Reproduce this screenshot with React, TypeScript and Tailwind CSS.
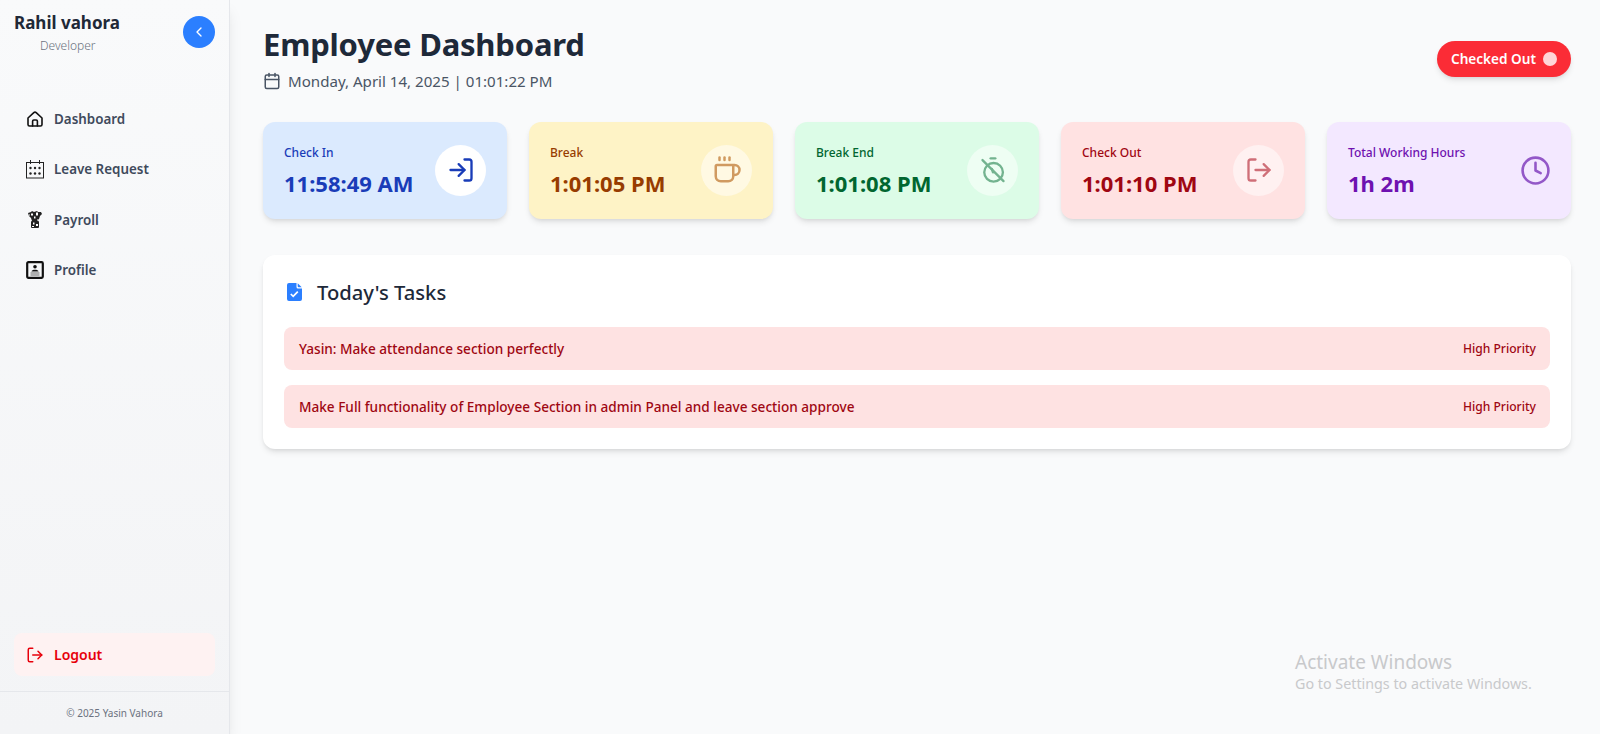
import type { ReactNode } from "react";
import { ChevronLeft, Calendar, LogIn, LogOut, Coffee, Clock } from "lucide-react";

const F = "font-['Noto_Sans','Open_Sans',sans-serif]";

function HomeIcon() {
  return (
    <svg width="18" height="18" viewBox="0 0 18 18" fill="none" stroke="#111" strokeWidth="1.6" strokeLinejoin="round" strokeLinecap="round">
      <path d="M2 8 L7.8 2.6 a1.8 1.8 0 0 1 2.4 0 L16 8 V14.5 a1.5 1.5 0 0 1 -1.5 1.5 H3.5 A1.5 1.5 0 0 1 2 14.5 Z" />
      <path d="M6.6 16 V11.2 a1.2 1.2 0 0 1 1.2 -1.2 h2.4 a1.2 1.2 0 0 1 1.2 1.2 V16" />
    </svg>
  );
}

function CalIcon() {
  return (
    <svg width="20" height="20" viewBox="0 0 20 20" fill="none" stroke="#222" strokeWidth="1">
      <rect x="1.5" y="3.5" width="17" height="15.5" />
      <path d="M5.5 1v4M14.5 1v4" />
      <g fill="#222" stroke="none">
        <circle cx="5.5" cy="9" r="1.2" /><circle cx="10" cy="9" r="1.2" /><circle cx="14.5" cy="9" r="1.2" />
        <circle cx="5.5" cy="14.5" r="1.2" /><circle cx="10" cy="14.5" r="1.2" /><circle cx="14.5" cy="14.5" r="1.2" />
      </g>
    </svg>
  );
}

function PayIcon() {
  return (
    <svg width="14" height="17" viewBox="0 0 14 17" fill="#222">
      <path d="M0 2l3-1 1-1 2 1 3-1 1 1 3 0 1 2-2 2-1 3-1 2H4L3 7 1 5z" />
      <rect x="3" y="10" width="8" height="7" rx="1" />
      <g fill="#fff">
        <rect x="3" y="2.5" width="2" height="2" /><rect x="8" y="1.5" width="2" height="3" /><rect x="6" y="5.5" width="1.5" height="2" /><rect x="1" y="3.5" width="1" height="1" />
        <rect x="5" y="11.5" width="1.5" height="2" /><rect x="8" y="13" width="2" height="2" /><rect x="4" y="15" width="2" height="1" /><rect x="9.5" y="8" width="1" height="2" />
      </g>
    </svg>
  );
}

function ProfileIcon() {
  return (
    <svg width="18" height="18" viewBox="0 0 18 18" fill="none">
      <rect x="1.2" y="1.2" width="15.6" height="15.6" rx="1.2" stroke="#111" strokeWidth="2.2" />
      <circle cx="9" cy="5.8" r="1.8" fill="#111" />
      <path d="M5.5 10.4c0-2.2 7-2.2 7 0z" fill="#111" />
      <path d="M4.5 12h9M4.5 14h9" stroke="#666" strokeWidth="1.1" />
    </svg>
  );
}

function StopIcon() {
  return (
    <svg width="28" height="28" viewBox="0 0 24 24" fill="none" stroke="#73b38f" strokeWidth="2" strokeLinecap="round">
      <path d="M10 2h4" />
      <circle cx="12.5" cy="14" r="8" />
      <path d="M12 14l-1-3" />
      <path d="M3 3.5l18 18" />
    </svg>
  );
}

function TaskDoc() {
  return (
    <svg width="15" height="18" viewBox="0 0 15 18">
      <path d="M2 0h7.5v4a1.5 1.5 0 0 0 1.5 1.5h4V16a2 2 0 0 1-2 2H2a2 2 0 0 1-2-2V2a2 2 0 0 1 2-2z" fill="#2b7fff" />
      <path d="M10.7 0.3 14.7 4.3h-3a1 1 0 0 1-1-1z" fill="#2b7fff" />
      <path d="M3.8 11l2.4 2.4 4.6-4.8" fill="none" stroke="#fff" strokeWidth="1.7" />
    </svg>
  );
}

function Nav({ icon, label }: { icon: ReactNode; label: string }) {
  return (
    <div className="flex h-[34px] items-center px-[25px]">
      <span className="flex w-[20px] justify-center">{icon}</span>
      <span className="ml-[9px] text-[13.4px] font-semibold text-[#3f4a5c]">{label}</span>
    </div>
  );
}

function Card({ bg, label, value, labelC, valueC, circle, icon }: { bg: string; label: string; value: string; labelC: string; valueC: string; circle: string; icon: ReactNode }) {
  return (
    <div className={`flex h-[97px] items-center justify-between rounded-[12px] pl-[21px] pr-[21px] shadow-md ${bg}`}>
      <div className="pt-[2px]">
        <div className={`text-[12px] font-medium leading-[16px] ${labelC}`}>{label}</div>
        <div className={`mt-[8px] text-[22px] font-bold leading-[28px] ${valueC}`}>{value}</div>
      </div>
      <div className={`flex items-center justify-center rounded-full ${circle}`}>{icon}</div>
    </div>
  );
}

function Task({ text }: { text: string }) {
  return (
    <div className="flex h-[43px] items-center justify-between rounded-[8px] bg-[#fee2e2] pl-[15px] pr-[14px] pt-[2px] font-medium text-[#9f0712]">
      <span className="text-[13.6px]">{text}</span>
      <span className="text-[12.1px]">High Priority</span>
    </div>
  );
}

export default function App() {
  return (
    <div className={`flex h-[734px] w-[1600px] overflow-hidden bg-[#f9fafb] ${F}`}>
      <aside className="z-10 flex w-[230px] shrink-0 flex-col border-r border-[#e5e7eb] bg-gradient-to-b from-[#f9fafb] to-[#f3f4f6] shadow-lg">
        <div className="flex items-start justify-between pl-[14px] pr-[14px] pt-[11px]">
          <div>
            <div className="text-[17px] font-bold leading-[23px] text-[#1f2937]">Rahil vahora</div>
            <div className="mt-[4px] pl-[26px] text-[12px] font-light leading-[16px] text-[#6b7280]">Developer</div>
          </div>
          <div className="mt-[5px] flex h-[32px] w-[32px] items-center justify-center rounded-full bg-[#2b7fff]">
            <ChevronLeft size={16} color="#fff" />
          </div>
        </div>
        <nav className="mt-[48px] flex flex-col gap-[16.3px]">
          <Nav icon={<HomeIcon />} label="Dashboard" />
          <Nav icon={<CalIcon />} label="Leave Request" />
          <Nav icon={<PayIcon />} label="Payroll" />
          <Nav icon={<ProfileIcon />} label="Profile" />
        </nav>
        <div className="mt-auto px-[14px]">
          <div className="flex h-[43px] items-center rounded-[8px] bg-[#fef2f2] pl-[12px] text-[14px] font-semibold text-[#e7000b]">
            <LogOut size={18} />
            <span className="ml-[10px]">Logout</span>
          </div>
        </div>
        <div className="mt-[15px] flex h-[43px] items-center justify-center border-t border-[#e5e7eb] text-[10px] text-[#6b7280]">© 2025 Yasin Vahora</div>
      </aside>
      <main className="relative min-w-0 flex-1 pl-[33px] pr-[29px] pt-[23px]">
        <div className="flex items-start justify-between">
          <div>
            <h1 className="text-[31px] font-bold leading-[42px] tracking-[-0.2px] text-[#1e2939]">Employee Dashboard</h1>
            <div className="mt-[5px] flex items-center text-[15.1px] text-[#4a5565]">
              <Calendar size={18} />
              <span className="ml-[7px]">Monday, April 14, 2025 | 01:01:22 PM</span>
            </div>
          </div>
          <div className="mt-[18px] flex h-[36px] items-center rounded-full bg-[#fb2c36] px-[14px] text-[13.6px] font-semibold text-white shadow-md">
            Checked Out
            <span className="ml-[7px] h-[14px] w-[14px] rounded-full bg-[#ffd6d8]" />
          </div>
        </div>
        <div className="mt-[29px] grid grid-cols-5 gap-[22px]">
          <Card bg="bg-[#dbeafe]" label="Check In" value="11:58:49 AM" labelC="text-[#193cb8]" valueC="text-[#193cb8]" circle="h-[51px] w-[51px] bg-white" icon={<LogIn size={28} color="#193cb8" />} />
          <Card bg="bg-[#fef3c6]" label="Break" value="1:01:05 PM" labelC="text-[#973c00]" valueC="text-[#973c00]" circle="h-[51px] w-[51px] bg-white/50" icon={<Coffee size={30} color="#d09a60" />} />
          <Card bg="bg-[#dcfce7]" label="Break End" value="1:01:08 PM" labelC="text-[#016630]" valueC="text-[#016630]" circle="h-[51px] w-[51px] bg-white/50" icon={<StopIcon />} />
          <Card bg="bg-[#ffe2e2]" label="Check Out" value="1:01:10 PM" labelC="text-[#9f0712]" valueC="text-[#9f0712]" circle="h-[51px] w-[51px] bg-white/50" icon={<LogOut size={28} color="#cf6f78" />} />
          <Card bg="bg-[#f3e8ff]" label="Total Working Hours" value="1h 2m" labelC="text-[#6e11b0]" valueC="text-[#6e11b0]" circle="-mr-[1px]" icon={<Clock size={31} color="#9358c8" />} />
        </div>
        <section className="mt-[36px] rounded-[12px] bg-white p-[21px] shadow-md">
          <div className="flex items-center pl-[3px]">
            <TaskDoc />
            <h2 className="ml-[15px] text-[20.2px] font-medium leading-[32px] text-[#1e2939]">Today's Tasks</h2>
          </div>
          <div className="mt-[19px] flex flex-col gap-[15px]">
            <Task text="Yasin: Make attendance section perfectly" />
            <Task text="Make Full functionality of Employee Section in admin Panel and leave section approve" />
          </div>
        </section>
        <div className="absolute left-[1065px] top-[650px] text-[#c8c9cb]">
          <div className="text-[19px] font-normal leading-[24px]">Activate Windows</div>
          <div className="text-[14.3px] leading-[20px]">Go to Settings to activate Windows.</div>
        </div>
      </main>
    </div>
  );
}
